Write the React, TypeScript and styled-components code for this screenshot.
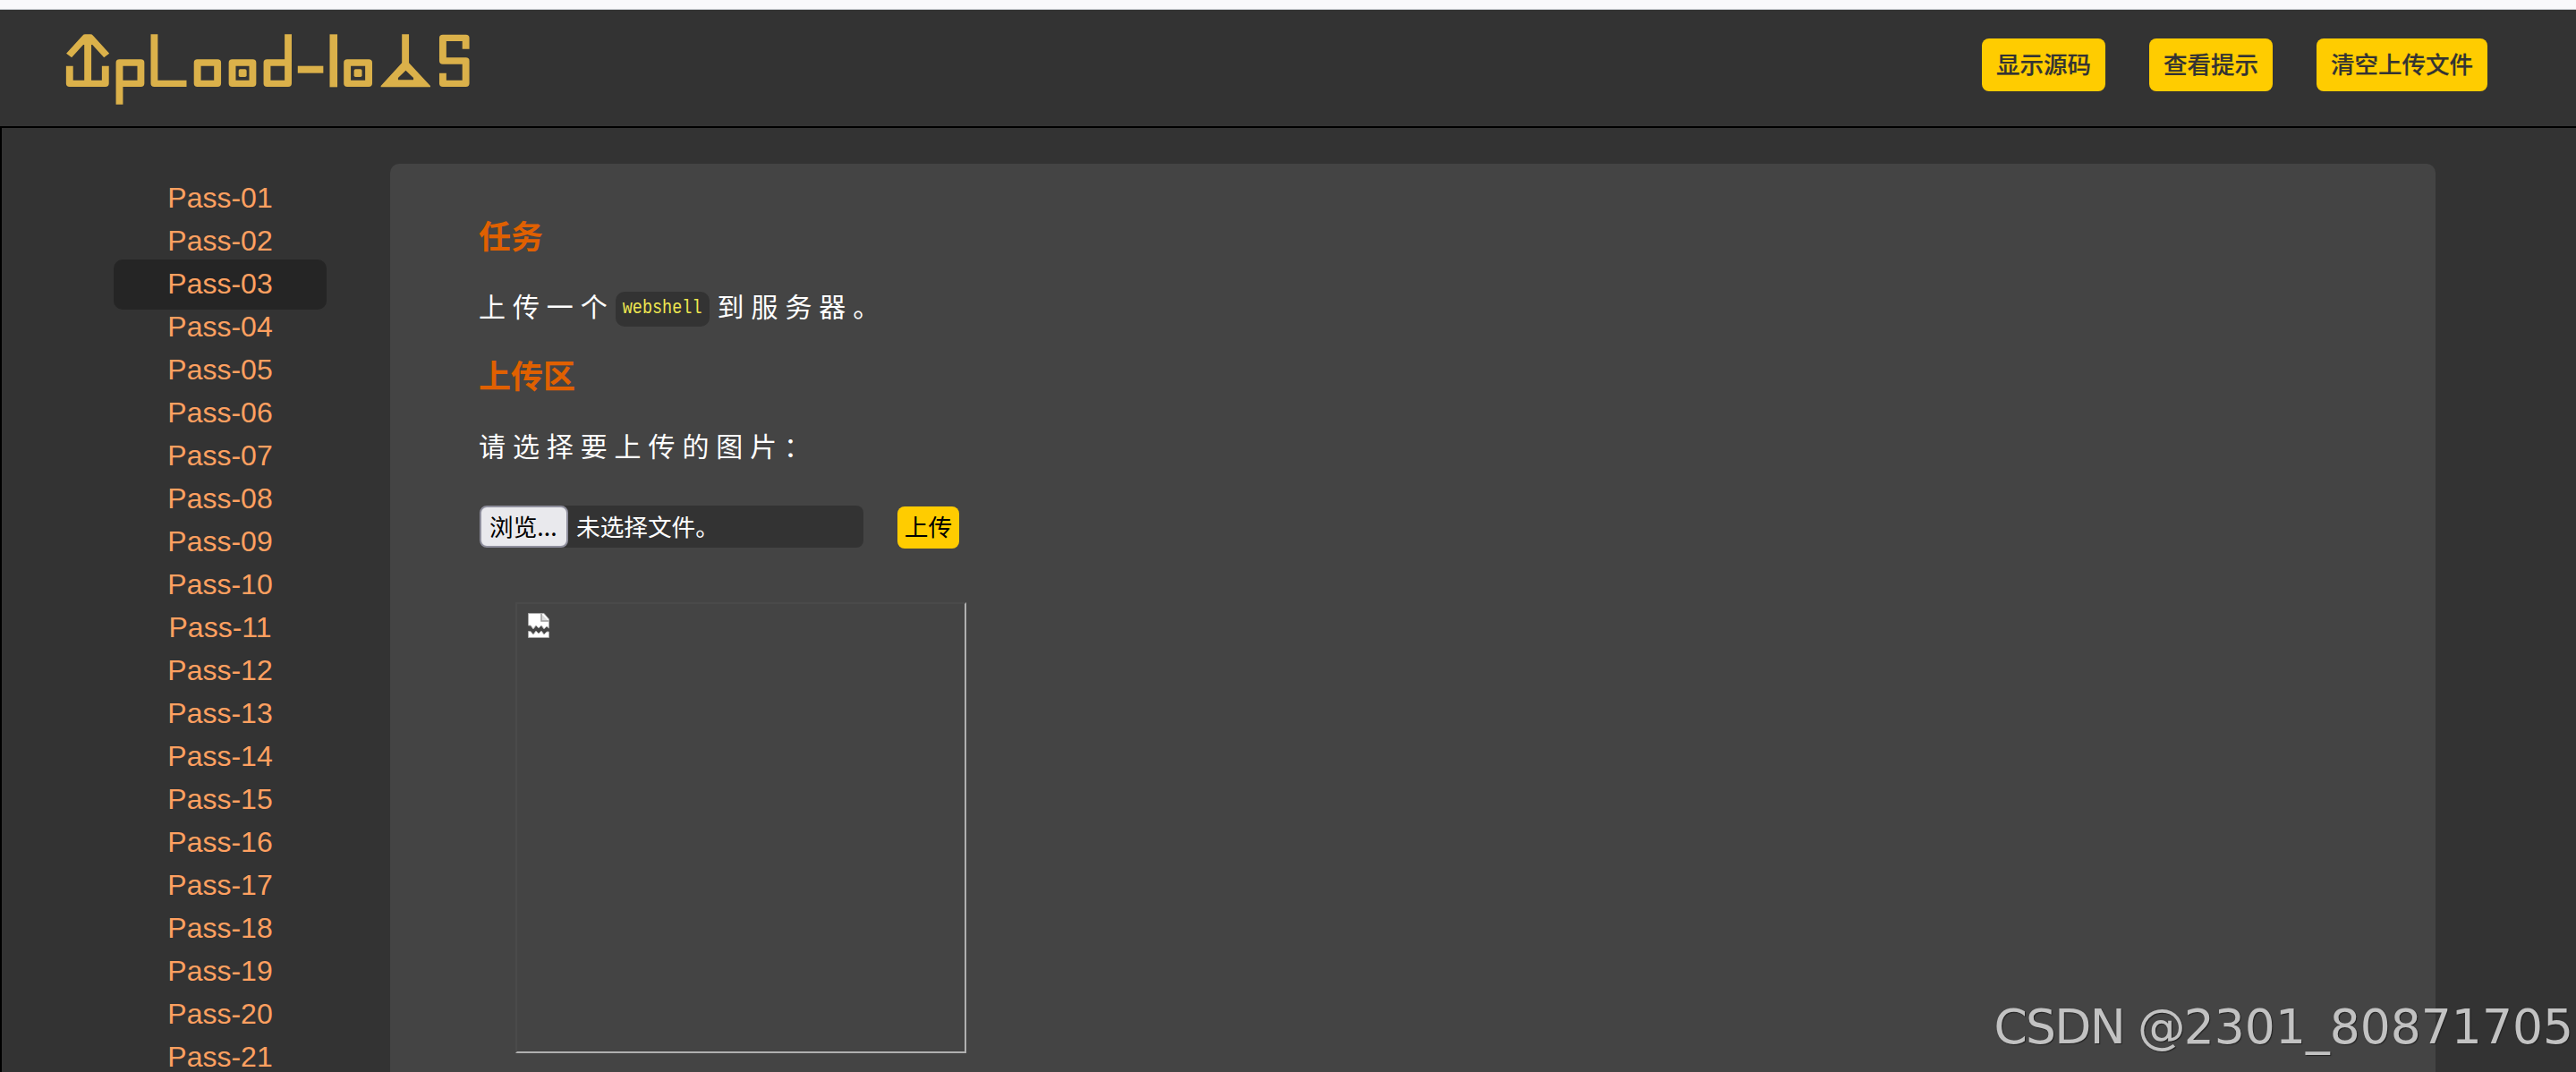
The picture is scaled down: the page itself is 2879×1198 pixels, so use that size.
import React from 'react';
import styled, { createGlobalStyle } from 'styled-components';

const cjk = `'Noto Sans CJK SC', 'Liberation Sans', sans-serif`;

const GlobalStyle = createGlobalStyle`
  * { box-sizing: border-box; }
  body { margin: 0; background: #333; font-family: ${cjk}; }
  ul, h3, p { margin: 0; padding: 0; }
`;

const Page = styled.div`
  position: relative;
  display: flex;
  flex-direction: column;
  width: 2879px;
  height: 1198px;
  overflow: hidden;
`;

const BrowserEdge = styled.div`
  flex: none;
  height: 11px;
  background: #f9f9fb;
  border-bottom: 1px solid #c4c8cc;
`;

const Header = styled.header`
  flex: none;
  display: flex;
  justify-content: space-between;
  align-items: flex-start;
  height: 132px;
  padding: 24px 99px 0 71.43px;
  background: #333;
  border-bottom: 2px solid #000;
`;

const LogoSvg = styled.svg`
  display: block;
  width: 457.14px;
  height: 85px;
`;

const Actions = styled.nav`
  display: flex;
  gap: 49px;
  padding-top: 8px;
`;

const ActionButton = styled.button`
  height: 59px;
  padding: 0 16px 3px;
  border: 0;
  border-radius: 8px;
  background: #fc0;
  color: #333;
  font: 500 26.5px/54px ${cjk};
  -webkit-text-stroke: 0.2px #333;
  white-space: nowrap;
`;

const Main = styled.main`
  flex: 1;
  display: flex;
  min-height: 0;
  border-left: 2px solid #000;
`;

const Menu = styled.ul`
  flex: none;
  width: 434px;
  padding: 51px 71px 0 125px;
  list-style: none;
`;

const MenuItem = styled.li<{ $active: boolean }>`
  height: 56px;
  margin-bottom: -8px;
  padding: 3px 0 5px;
  border-radius: 10px;
  background: ${(p) => (p.$active ? '#252525' : 'transparent')};
  color: #ffa060;
  font: 32px/48px 'Liberation Sans', Arial, sans-serif;
  text-align: center;
`;

const Panel = styled.section`
  flex: none;
  display: flex;
  flex-direction: column;
  align-items: flex-start;
  width: 2286px;
  margin-top: 40px;
  padding: 52px 100px 0;
  border-radius: 10px 10px 0 0;
  background: #444;
`;

const Title = styled.h3`
  height: 54px;
  margin-left: -1px;
  color: #e06000;
  font: 700 36px/54px ${cjk};
`;

const Text = styled.p`
  display: flex;
  align-items: center;
  height: 48px;
  margin: 28px 0 26px -1px;
  color: #fff;
  font: 400 30px/48px ${cjk};
  letter-spacing: 7.9px;
  white-space: nowrap;
`;

const Code = styled.code`
  height: 39px;
  width: 105px;
  margin: 9px 9px 0 1px;
  border-radius: 10px;
  background: #333;
  color: #eee650;
  font: 18.5px/38px 'Liberation Mono', monospace;
  letter-spacing: 0;
  text-align: center;
`;

const CodeText = styled.span`
  display: block;
  transform: scaleY(1.22);
`;

const UploadRow = styled.form`
  display: flex;
  gap: 38px;
  margin-top: 18px;
`;

const FileField = styled.label`
  display: flex;
  gap: 9px;
  width: 429px;
  height: 47px;
  border-radius: 8px;
  background: #333;
  color: #fff;
  font: 26.67px/46px ${cjk};
`;

const Browse = styled.span`
  width: 99px;
  height: 47px;
  padding-left: 9px;
  border: 2px solid #8f8f9d;
  border-radius: 8px;
  background: #e9e9ed;
  color: #000;
  line-height: 42px;
  white-space: nowrap;
`;

const Submit = styled.button`
  width: 69px;
  height: 47px;
  margin-top: 1px;
  padding: 0 0 3px;
  border: 0;
  border-radius: 8px;
  background: #fc0;
  color: #000;
  font: 26.67px/44px ${cjk};
`;

const Preview = styled.div`
  width: 504px;
  height: 504px;
  margin: 60px 0 0 40px;
  padding: 10px 12px;
  border: 2px solid;
  border-color: #4a4a4a #b0b0b0 #b0b0b0 #4a4a4a;
`;

const BrokenIcon = styled.svg`
  display: block;
  width: 24px;
  height: 28px;
`;

const Watermark = styled.div`
  position: absolute;
  right: 3px;
  top: 1108px;
  color: #c2c2c2;
  font: 400 53.5px/80px 'DejaVu Sans', sans-serif;
  text-shadow: 1px 1px 1px #222;
  white-space: nowrap;
`;

const WatermarkBrand = styled.span`
  letter-spacing: -1.8px;
`;

const levels = Array.from({ length: 21 }, (_, i) => `Pass-${String(i + 1).padStart(2, '0')}`);
const actions = ['显示源码', '查看提示', '清空上传文件'];

function Logo() {
  return (
    <LogoSvg viewBox="200 105 1280 255" preserveAspectRatio="none" fill="none" stroke="#dbb14a" strokeWidth="22" strokeLinejoin="round" strokeLinecap="butt">
      <path d="M217 186 L268 126 H284 L335 186" />
      <path d="M264 120 H288 L300 150 H252Z" fill="#dbb14a" stroke="none" />
      <path d="M276 130 V279 M219 221 V280 H331 V221" />
      <path d="M375 350 V210 H442 V280 H380" />
      <path d="M484 115 V280 H585" />
      <path d="M619 210 H682 V280 H619Z M728 210 H792 V280 H728Z M837 210 H903 V280 H837Z M903 210 V115" />
      <rect x="748" y="232" width="25" height="26" rx="5" fill="#dbb14a" stroke="none" />
      <path d="M933 233 H1013" strokeWidth="24" />
      <path d="M1045 115 V292" strokeWidth="24" />
      <path d="M1088 210 H1155 V280 H1088Z" />
      <rect x="1109" y="232" width="25" height="26" rx="5" fill="#dbb14a" stroke="none" />
      <path d="M1259 115 H1281 V211 L1348 288 V292 H1193 V288 L1259 211Z M1271 236 L1247 261 V268 H1295 V261Z" fill="#dbb14a" fillRule="evenodd" stroke="none" />
      <path d="M1459 164 V127 H1387 V204 H1459 V280 H1387 V245" />
    </LogoSvg>
  );
}

export default function App() {
  return (
    <Page>
      <GlobalStyle />
      <BrowserEdge />
      <Header>
        <Logo />
        <Actions>
          {actions.map((label) => (
            <ActionButton key={label}>{label}</ActionButton>
          ))}
        </Actions>
      </Header>
      <Main>
        <Menu>
          {levels.map((level) => (
            <MenuItem key={level} $active={level === 'Pass-03'}>{level}</MenuItem>
          ))}
        </Menu>
        <Panel>
          <Title>任务</Title>
          <Text>上传一个<Code><CodeText>webshell</CodeText></Code>到服务器。</Text>
          <Title>上传区</Title>
          <Text>请选择要上传的图片：</Text>
          <UploadRow onSubmit={(e) => e.preventDefault()}>
            <FileField>
              <Browse>浏览...</Browse>
              未选择文件。
            </FileField>
            <Submit>上传</Submit>
          </UploadRow>
          <Preview>
            <BrokenIcon viewBox="0 0 24 28">
              <path d="M0.5 0.5H18L23.5 7V17L21 15L18 18L15 14L12 17L9 14L6 18L3 14L0.5 14Z" fill="#fff" stroke="#aaa" />
              <path d="M15 1V9H23" fill="#ddd" stroke="#999" strokeWidth="1.5" />
              <path d="M0.5 20.5H3L6 24L9 20L12 23L15 20L18 24L21 21H23.5V27.5H0.5Z" fill="#fff" stroke="#aaa" />
            </BrokenIcon>
          </Preview>
        </Panel>
      </Main>
      <Watermark><WatermarkBrand>CSDN @</WatermarkBrand>2301_80871705</Watermark>
    </Page>
  );
}
